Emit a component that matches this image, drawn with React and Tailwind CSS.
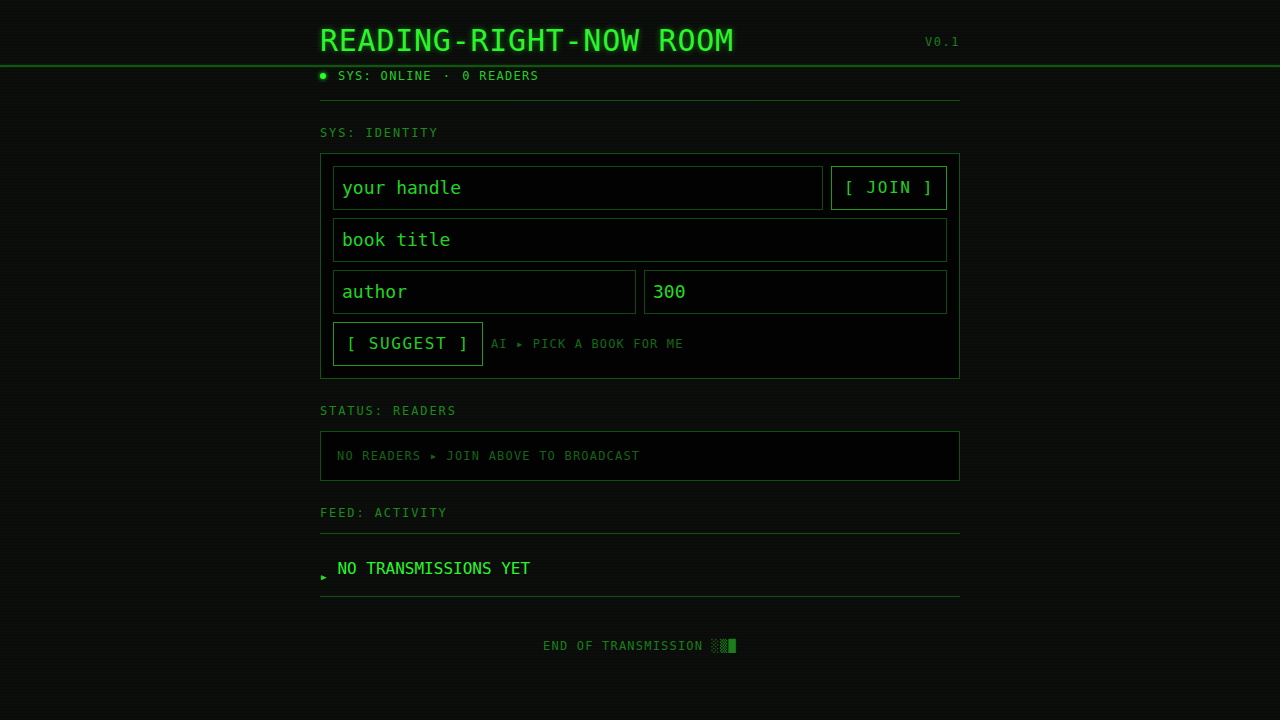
import React from "react";

const mono = { fontFamily: '"DejaVu Sans Mono", "Liberation Mono", monospace' };

export default function App() {
  return (
    <div
      className="relative min-h-[720px] w-full overflow-hidden bg-[#0c0e0c] text-[#22dd22]"
      style={mono}
    >
      <div className="pointer-events-none absolute inset-0 bg-[repeating-linear-gradient(0deg,rgba(0,0,0,0.28)_0px,rgba(0,0,0,0.28)_1px,transparent_1px,transparent_3px)]" />
      <div className="pointer-events-none absolute left-0 right-0 top-[65px] h-[2px] bg-[#115511] shadow-[0_0_3px_#0c3c0c]" />

      <div className="relative mx-auto w-[640px] pt-[23px]">
        <header className="border-b border-[#145214] pb-[16px]">
          <div className="flex items-center justify-between">
            <h1 className="text-[30px] leading-[36px] tracking-[0.75px] text-[#2bf52b] [text-shadow:0_0_6px_rgba(40,255,40,0.45)]">
              READING-RIGHT-NOW ROOM
            </h1>
            <span className="mt-[2px] text-[12px] leading-4 tracking-[1.5px] text-[#1a7f1a]">V0.1</span>
          </div>
          <div className="mt-[9px] flex items-center gap-3 text-[12px] leading-4 tracking-[1.3px] text-[#22d022]">
            <span className="h-[6px] w-[6px] rounded-full bg-[#2bff2b] shadow-[0_0_4px_#2bff2b]" />
            <span className="flex items-center gap-[11px]">
              <span>SYS: ONLINE</span>
              <span>·</span>
              <span>0 READERS</span>
            </span>
          </div>
        </header>

        <section className="mt-[24px]">
          <div className="text-[12px] leading-4 tracking-[1.9px] text-[#1c8a1c]">SYS: IDENTITY</div>
          <div className="mt-[12px] flex flex-col gap-2 border border-[#0f550f] bg-[#010201] p-3">
            <div className="flex gap-2">
              <input
                className="h-[44px] flex-1 border border-[#0e4a0e] bg-[#010201] px-[8px] pb-[2px] text-[18px] text-[#22dd22] outline-none placeholder:text-[#22d522]"
                placeholder="your handle"
                style={mono}
              />
              <button className="h-[44px] w-[116px] border border-[#1f9a1f] bg-[#010201] text-[16px] tracking-[1.6px] text-[#22d022]" style={mono}>
                [ JOIN ]
              </button>
            </div>
            <input
              className="h-[44px] w-full border border-[#0e4a0e] bg-[#010201] px-[8px] pb-[2px] text-[18px] text-[#22dd22] outline-none placeholder:text-[#22d522]"
              placeholder="book title"
              style={mono}
            />
            <div className="flex gap-2">
              <input
                className="h-[44px] min-w-0 flex-1 border border-[#0e4a0e] bg-[#010201] px-[8px] pb-[2px] text-[18px] text-[#22dd22] outline-none placeholder:text-[#22d522]"
                placeholder="author"
                style={mono}
              />
              <input
                className="h-[44px] min-w-0 flex-1 border border-[#0e4a0e] bg-[#010201] px-[8px] pb-[2px] text-[18px] text-[#22dd22] outline-none"
                defaultValue="300"
                style={mono}
              />
            </div>
            <div className="flex items-center gap-2">
              <button className="h-[44px] w-[150px] border border-[#1f9a1f] bg-[#010201] text-[16px] tracking-[1.6px] text-[#22d022]" style={mono}>
                [ SUGGEST ]
              </button>
              <span className="text-[12px] leading-4 tracking-[1.15px] text-[#166a16]">AI ▸ PICK A BOOK FOR ME</span>
            </div>
          </div>
        </section>

        <section className="mt-[24px]">
          <div className="text-[12px] leading-4 tracking-[1.9px] text-[#1c8a1c]">STATUS: READERS</div>
          <div className="mt-[12px] border border-[#0f4f0f] bg-[#010201] px-4 py-4 text-[12px] leading-4 tracking-[1.2px] text-[#176417]">
            NO READERS ▸ JOIN ABOVE TO BROADCAST
          </div>
        </section>

        <section className="mt-[24px]">
          <div className="text-[12px] leading-4 tracking-[1.9px] text-[#1c8a1c]">FEED: ACTIVITY</div>
          <div className="mt-[12px] border-y border-[#145214] pb-[15px] pt-[23px]">
            <div className="flex items-end gap-[11px]">
              <span className="mb-[-2px] pl-[1px] text-[9px] leading-[12px] text-[#22dd22]">▶</span>
              <span className="text-[16px] leading-6 text-[#2bf52b]">NO TRANSMISSIONS YET</span>
            </div>
          </div>
        </section>

        <footer className="mt-[41px] text-center text-[12px] leading-4 tracking-[1.2px] text-[#1a7f1a]">
          END OF TRANSMISSION ░▒█
        </footer>
      </div>
    </div>
  );
}
